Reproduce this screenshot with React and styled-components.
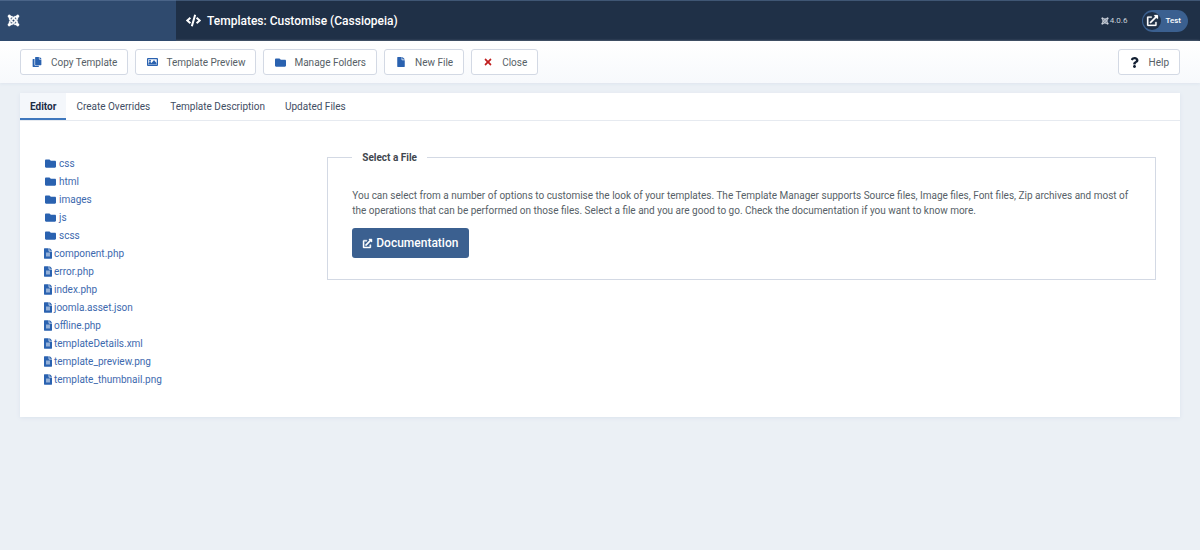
import React, { useState } from "react";
import styled, { createGlobalStyle } from "styled-components";
import {
  FaJoomla, FaCode, FaCopy, FaFolder, FaFile, FaTimes,
  FaQuestion, FaExternalLinkAlt, FaFileAlt,
} from "react-icons/fa";

const color = {
  navy: "#1f3047",
  blue: "#2f4a6e",
  button: "#3b6090",
  icon: "#2a62b0",
  link: "#3d69ae",
  text: "#575f67",
  line: "#d3d9e4",
  page: "#ebf0f5",
};

const GlobalStyle = createGlobalStyle`
  *, *::before, *::after { box-sizing: border-box; }
  body {
    margin: 0;
    min-height: 100vh;
    background: ${color.page};
    color: ${color.text};
    font: 400 10px/15px Roboto, "Liberation Sans", sans-serif;
  }
  button { font: inherit; cursor: pointer; }
  a { text-decoration: none; }
  svg { display: block; flex: none; }
`;

const Header = styled.header`
  display: flex;
  height: 41px;
  background: ${color.navy};
  color: #fff;
  box-shadow: inset 0 1px #3f5674;
`;

const Brand = styled.a`
  display: flex;
  align-items: center;
  width: 176px;
  padding-left: 7px;
  background: ${color.blue};
  color: #fff;
  box-shadow: inset 0 1px #4a6488;
  svg { stroke: currentColor; stroke-width: 10px; overflow: visible; }
`;

const Title = styled.h1`
  display: flex;
  flex: 1;
  align-items: center;
  gap: 6px;
  margin: 0;
  padding-left: 10px;
  font-size: 12px;
  line-height: 20px;
  font-weight: 500;
`;

const Status = styled.div`
  display: flex;
  align-items: center;
  gap: 15px;
  padding-right: 12px;
  font-size: 8px;
`;

const Version = styled.span`
  display: flex;
  align-items: center;
  gap: 1px;
  color: #c9d0da;
  svg { stroke: currentColor; stroke-width: 16px; overflow: visible; }
`;

const SiteLink = styled.a`
  display: flex;
  align-items: center;
  gap: 4px;
  height: 22px;
  padding: 0 7px 0 1px;
  border-radius: 11px;
  background: ${color.button};
  color: #fff;
  font-weight: 500;
`;

const SiteBadge = styled.span`
  display: grid;
  place-items: center;
  width: 18px;
  height: 18px;
  border-radius: 50%;
  background: ${color.navy};
  svg { stroke: currentColor; stroke-width: 12px; overflow: visible; }
`;

const Toolbar = styled.div`
  display: flex;
  gap: 7px;
  padding: 8px 20px;
  background: linear-gradient(#fff, #f7f9fc);
  box-shadow: 0 1px 3px #dde4ee;
`;

const ToolButton = styled.button`
  display: flex;
  align-items: center;
  gap: 8px;
  height: 26px;
  margin-left: ${(p) => (p.$end ? "auto" : "0")};
  padding: 0 10px;
  border: 1px solid ${color.line};
  border-radius: 3px;
  background: #fff;
  color: ${color.text};
`;

const ToolIcon = styled.span`
  display: grid;
  place-items: center;
  width: 12px;
  color: ${(p) => p.$color || color.icon};
`;

const Panel = styled.main`
  margin: 10px 20px;
  background: #fff;
  box-shadow: 0 1px 4px #dbe3ed;
`;

const TabList = styled.div`
  display: flex;
  border-bottom: 1px solid #e6eaf0;
`;

const Tab = styled.button`
  height: 27px;
  padding: 0 10px;
  border: 0;
  background: ${(p) => (p.$active ? "#f4f7fb" : "transparent")};
  box-shadow: ${(p) => (p.$active ? "inset 0 -2px #3e77bd" : "none")};
  color: ${(p) => (p.$active ? "#1b2c45" : "#3f4e63")};
  font-weight: ${(p) => (p.$active ? 700 : 400)};
`;

const Content = styled.div`
  display: grid;
  grid-template-columns: 1fr 3fr;
  column-gap: 7px;
  align-items: start;
  padding: 29px 24px;
`;

const FileTree = styled.ul`
  margin: 0;
  padding: 4px 0 0;
  list-style: none;
`;

const FileLink = styled.a`
  display: flex;
  align-items: center;
  gap: ${(p) => (p.$folder ? "3px" : "2px")};
  height: 18px;
  padding-left: ${(p) => (p.$folder ? "1px" : "0")};
  color: ${color.link};
  svg { color: ${color.icon}; }
`;

const FileIcon = styled(FaFileAlt)`
  width: 8px;
  height: 11px;
`;

const Fieldset = styled.fieldset`
  min-width: 0;
  margin: 0;
  padding: 23px 24px 21px;
  border: 1px solid ${color.line};
`;

const Legend = styled.legend`
  padding: 0 10px;
  color: #3f464e;
  font-weight: 700;
`;

const Paragraph = styled.p`
  margin: 0 0 10px;
`;

const DocsLink = styled.a`
  display: flex;
  align-items: center;
  gap: 4px;
  width: fit-content;
  height: 30px;
  padding: 0 11px;
  border-radius: 3px;
  background: ${color.button};
  color: #fff;
  font-size: 12px;
  font-weight: 500;
  svg { stroke: currentColor; stroke-width: 24px; overflow: visible; }
`;

function PictureIcon() {
  return (
    <svg width="11" height="10" viewBox="0 0 22 20" fill="currentColor" aria-hidden="true">
      <path
        fillRule="evenodd"
        d="M2 2h18a2 2 0 0 1 2 2v12a2 2 0 0 1-2 2H2a2 2 0 0 1-2-2V4a2 2 0 0 1 2-2ZM2.5 4.5v11h17v-11Z"
      />
      <circle cx="6" cy="7.5" r="2" />
      <path d="M3 15v-3l3-3 3 3 5-6 5 6v3Z" />
    </svg>
  );
}

const tools = [
  { label: "Copy Template", icon: <FaCopy size={10} /> },
  { label: "Template Preview", icon: <PictureIcon /> },
  { label: "Manage Folders", icon: <FaFolder size={11} /> },
  { label: "New File", icon: <FaFile size={10} /> },
  { label: "Close", icon: <FaTimes size={10} />, color: "#c01f1f" },
];
const tabs = ["Editor", "Create Overrides", "Template Description", "Updated Files"];
const folders = ["css", "html", "images", "js", "scss"];
const files = [
  "component.php", "error.php", "index.php", "joomla.asset.json", "offline.php",
  "templateDetails.xml", "template_preview.png", "template_thumbnail.png",
];

export default function App() {
  const [active, setActive] = useState("Editor");
  return (
    <>
      <GlobalStyle />
      <Header>
        <Brand href="#home" aria-label="Home"><FaJoomla size={13} /></Brand>
        <Title><FaCode size={15} />Templates: Customise (Cassiopeia)</Title>
        <Status>
          <Version><FaJoomla size={8} />4.0.6</Version>
          <SiteLink href="#site">
            <SiteBadge><FaExternalLinkAlt size={11} /></SiteBadge>
            Test
          </SiteLink>
        </Status>
      </Header>
      <Toolbar role="toolbar" aria-label="Toolbar">
        {tools.map((t) => (
          <ToolButton key={t.label} type="button">
            <ToolIcon $color={t.color}>{t.icon}</ToolIcon>
            {t.label}
          </ToolButton>
        ))}
        <ToolButton type="button" $end>
          <ToolIcon $color="#132033"><FaQuestion size={11} /></ToolIcon>
          Help
        </ToolButton>
      </Toolbar>
      <Panel>
        <TabList role="tablist">
          {tabs.map((t) => (
            <Tab key={t} type="button" role="tab" aria-selected={t === active}
              $active={t === active} onClick={() => setActive(t)}>
              {t}
            </Tab>
          ))}
        </TabList>
        <Content>
          <FileTree>
            {folders.map((f) => (
              <li key={f}><FileLink href="#folder" $folder><FaFolder size={11} />{f}</FileLink></li>
            ))}
            {files.map((f) => (
              <li key={f}><FileLink href="#file"><FileIcon />{f}</FileLink></li>
            ))}
          </FileTree>
          <Fieldset>
            <Legend>Select a File</Legend>
            <Paragraph>
              You can select from a number of options to customise the look of your templates. The Template
              Manager supports Source files, Image files, Font files, Zip archives and most of the operations
              that can be performed on those files. Select a file and you are good to go. Check the
              documentation if you want to know more.
            </Paragraph>
            <DocsLink href="#documentation"><FaExternalLinkAlt size={9} />Documentation</DocsLink>
          </Fieldset>
        </Content>
      </Panel>
    </>
  );
}
